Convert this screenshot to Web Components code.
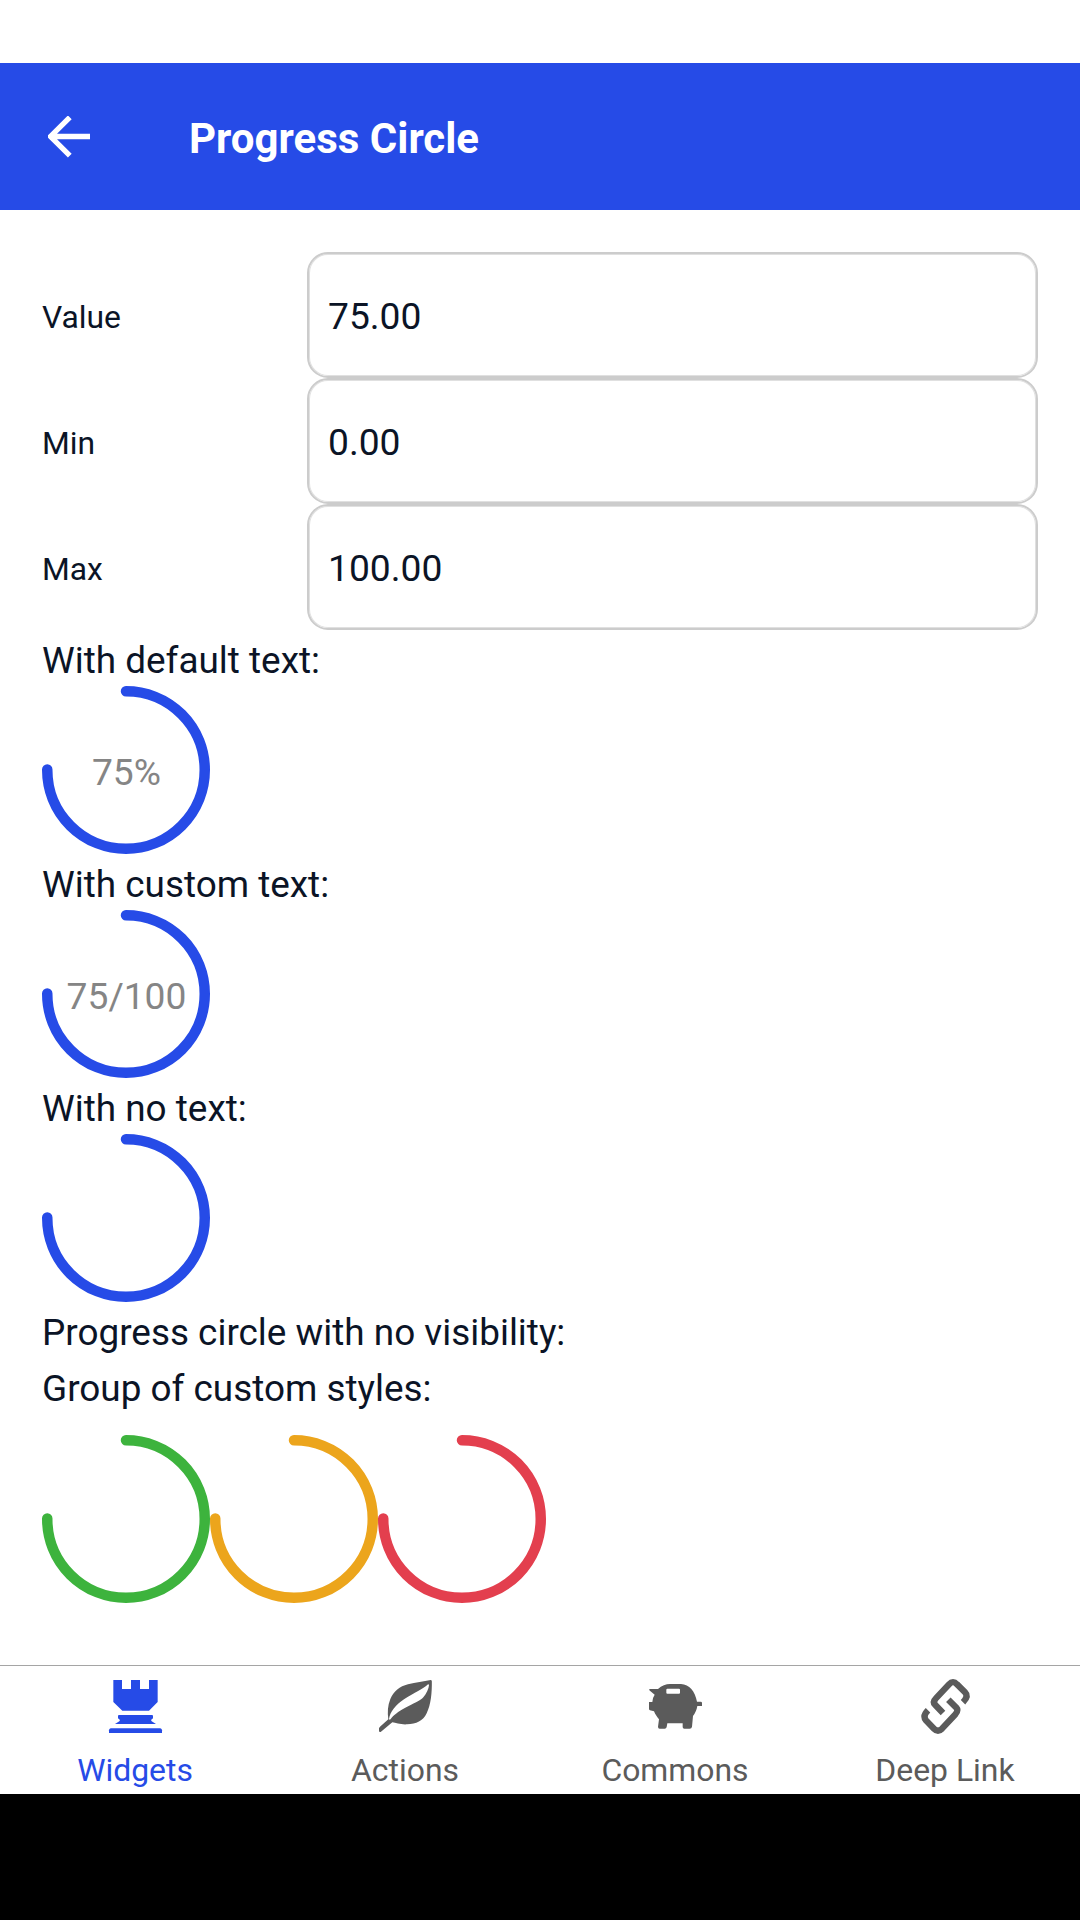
<!DOCTYPE html>
<html lang="en">
<head>
<meta charset="utf-8">
<title>Progress Circle</title>
<style>
html,body{margin:0;padding:0;background:#fff}
body{font-family:Roboto,"Noto Sans",sans-serif;color:#0b1426}
</style>
</head>
<body>
<app-screen>
  <app-bar>Progress Circle</app-bar>
  <number-field label="Value">75.00</number-field>
  <number-field label="Min">0.00</number-field>
  <number-field label="Max">100.00</number-field>
  <text-line>With default text:</text-line>
  <progress-circle value="75">75%</progress-circle>
  <text-line>With custom text:</text-line>
  <progress-circle value="75">75/100</progress-circle>
  <text-line>With no text:</text-line>
  <progress-circle value="75"></progress-circle>
  <text-line>Progress circle with no visibility:</text-line>
  <text-line>Group of custom styles:</text-line>
  <circle-group>
    <progress-circle value="75" color="#3db33d"></progress-circle>
    <progress-circle value="75" color="#eca51c"></progress-circle>
    <progress-circle value="75" color="#e33f4e"></progress-circle>
  </circle-group>
  <tab-bar>
    <tab-item icon="rook" active>Widgets</tab-item>
    <tab-item icon="leaf">Actions</tab-item>
    <tab-item icon="pig">Commons</tab-item>
    <tab-item icon="link">Deep Link</tab-item>
  </tab-bar>
</app-screen>
<script>
const define = (name, render) => customElements.define(name, class extends HTMLElement {
  constructor() {
    super();
    this.attachShadow({ mode: 'open' });
  }
  connectedCallback() {
    this.shadowRoot.innerHTML = render(this);
    if (name === 'app-screen') {
      this.querySelector('app-bar').slot = 'header';
      this.querySelector('tab-bar').slot = 'footer';
    }
  }
});

const icons = {
  rook: `<path d="M70 60H96V87H123V60H150V87H177V60H203V126L177 152H97L70 126Z"/>
    <path d="M87 165H186Q189 165 189 168V175L183 180L185 184L198 192H75L88 184L90 180L84 175V168Q84 165 87 165Z"/>
    <path d="M62 205H211Q216 206 216 211V219H57V211Q57 206 62 205Z"/>`,
  leaf: `<path fill-rule="evenodd" d="M212 60Q215 60 215.500 64C216 98 213 134 200 160C189 183 169 192 141 193C121 194 108 189 97 187L62 216Q57 217 57 213V205Q57 203 60 200L85 178C82 158 83 136 91 117C101 95 119 79 144 73C168 67 190 65 212 60ZM205 72C188 88 161 99 132 118C106 135 90 157 87 177Q89 181 92 177C104 161 122 151 146 138C167 127 181 122 190 112C200 100 206 86 207 76Z"/>`,
  pig: `<path fill-rule="evenodd" d="M58 87H84C95 77 108 72 120 72H153C178 73 195 94 201 125H212Q216 125 216 129V138H202C200 151 195 160 189 168L186 200Q185 206 179 206H163Q158 206 158 201V190H112L110 201Q109 206 104 206H89Q84 206 84 200L87 178C80 170 76 163 72 154L60 151Q57 150 57 147V126H67Q68 112 74 104L58 91ZM112 86Q109 86 109 89V98Q109 101 112 101H147Q150 101 150 98V89Q150 86 147 86Z"/>`,
  link: `<g fill="none" stroke="currentColor" stroke-width="19"><path d="M129 159L106 135Q97 126 107 116L147 73Q159 60 171 73L195 97Q207 109 189 127"/><path d="M145 119L169 143Q176 151 166 163L126 206Q114 218 102 206L78 181Q67 168 84 151"/></g>`
};

define('app-screen', () => `<style>
  :host{display:flex;flex-direction:column;box-sizing:border-box;width:1080px;height:1920px;padding:63px 0 126px;
    background:linear-gradient(#fff 1794px,#000 1794px);overflow:hidden}
  main{flex:1;min-height:0;padding:42px 42px 0;display:flex;flex-direction:column}
</style><slot name="header"></slot><main><slot></slot></main><slot name="footer"></slot>`);

define('app-bar', () => `<style>
  :host{display:flex;align-items:center;height:147px;flex:none;background:#264be7;color:#fff}
  svg{width:42px;height:42px;margin-left:48px;display:block}
  h1{margin:5px 0 0 99px;font-size:42px;line-height:50px;font-weight:700}
</style><svg viewBox="0 0 42 42"><path d="M42 20.500H3M21.800 1.300L2.600 20.500L21.800 39.700" fill="none" stroke="#fff" stroke-width="5.300"/></svg><h1><slot></slot></h1>`);

define('number-field', el => `<style>
  :host{display:flex;align-items:center;height:126px;flex:none}
  label{width:265px;font-size:31.800px;line-height:38px;padding-top:4px;box-sizing:border-box}
  div{flex:1;box-sizing:border-box;height:126px;border:2px solid #ccc;box-shadow:inset 0 0 0 1px #e0e0e0;border-radius:21px;display:flex;align-items:center;padding:2px 0 0 19px;font-size:37.200px}
</style><label>${el.getAttribute('label')}</label><div><slot></slot></div>`);

define('text-line', () => `<style>
  :host{display:block;box-sizing:border-box;flex:none;height:56px;padding-top:5px;font-size:36.900px;line-height:52px;white-space:nowrap}
</style><slot></slot>`);

define('progress-circle', el => {
  const r = 78.75, len = 2 * Math.PI * r;
  return `<style>
  :host{display:grid;place-items:center;width:168px;height:168px;flex:none;color:#858585;font-size:37.200px}
  svg,span{grid-area:1/1}
  span{padding:3px 0 0 1px;line-height:44px}
</style><svg width="168" height="168" viewBox="0 0 168 168"><circle cx="84" cy="84" r="${r}" fill="none"
  stroke="${el.getAttribute('color') || '#264be7'}" stroke-width="10.500" stroke-linecap="round"
  stroke-dasharray="${len * el.getAttribute('value') / 100} ${len}" transform="rotate(-90 84 84)"/></svg><span><slot></slot></span>`;
});

define('circle-group', () => `<style>:host{display:flex;padding-top:21px}</style><slot></slot>`);

define('tab-bar', () => `<style>
  :host{display:flex;flex:none;box-sizing:border-box;height:129px;border-top:1px solid #a5a5a5;background:#fff}
</style><slot></slot>`);

define('tab-item', el => `<style>
  :host{flex:1;display:flex;flex-direction:column;align-items:center;padding-top:9px;color:#5b5b5b;font-size:31.900px;line-height:38px}
  :host([active]){color:#264be7}
  svg{width:60px;height:60px;margin-bottom:16px;fill:currentColor;display:block}
</style><svg viewBox="45 45 180 180">${icons[el.getAttribute('icon')]}</svg><slot></slot>`);
</script>
</body>
</html>
